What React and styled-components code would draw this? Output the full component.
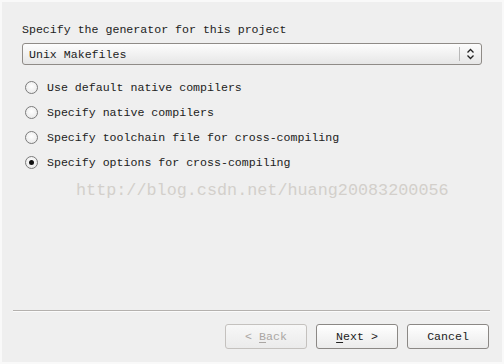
import React from 'react';
import styled, { createGlobalStyle } from 'styled-components';

const Global = createGlobalStyle`
  html, body {
    margin: 0;
    padding: 0;
    background: #efefef;
  }
`;

const Window = styled.div`
  width: 504px;
  height: 364px;
  box-sizing: border-box;
  border: 2px solid #f9f9f9;
  background: #efefef;
  display: flex;
  flex-direction: column;
  font-family: 'Liberation Mono', 'DejaVu Sans Mono', monospace;
  font-size: 11.6px;
  color: #222;
`;

const Body = styled.div`
  padding: 21px 20px 0 20px;
  display: flex;
  flex-direction: column;
`;

const Label = styled.div`
  line-height: 14px;
  height: 14px;
`;

const Combo = styled.div`
  margin-top: 6px;
  height: 22px;
  box-sizing: border-box;
  border: 1px solid #8f8b87;
  border-radius: 3px;
  background: linear-gradient(#fdfdfd, #e6e6e6);
  display: flex;
  align-items: center;
`;

const ComboText = styled.span`
  flex: 1;
  padding-left: 6px;
`;

const ComboButton = styled.span`
  width: 21px;
  height: 14px;
  border-left: 1px solid #b8b8b8;
  display: flex;
  align-items: center;
  justify-content: center;
`;

const Options = styled.div`
  margin-top: 10px;
  display: flex;
  flex-direction: column;
`;

const Option = styled.label`
  height: 25px;
  display: flex;
  align-items: center;
  gap: 9px;
  padding-left: 3px;
`;

const Radio = styled.span`
  width: 13px;
  height: 13px;
  box-sizing: border-box;
  border-radius: 50%;
  border: 1px solid #7b7b7b;
  background: radial-gradient(circle at 50% 40%, #ffffff, #e4e4e4);
  display: flex;
  align-items: center;
  justify-content: center;
  &::after {
    content: '';
    width: 5px;
    height: 5px;
    border-radius: 50%;
    background: ${(p) => (p.checked ? '#111' : 'transparent')};
  }
`;

const Watermark = styled.div`
  margin-top: 6px;
  padding-left: 54px;
  font-family: 'Liberation Mono', monospace;
  font-size: 16.8px;
  line-height: 20px;
  color: #d3cfcb;
`;

const Footer = styled.div`
  margin-top: auto;
  padding: 0 12px 13px 11px;
  display: flex;
  flex-direction: column;
`;

const Separator = styled.div`
  height: 1px;
  background: #b4b1ae;
  border-bottom: 1px solid #fbfbfb;
`;

const Buttons = styled.div`
  margin-top: 12px;
  padding-right: 1px;
  display: flex;
  justify-content: flex-end;
  gap: 9px;
`;

const Button = styled.button`
  width: 82px;
  height: 25px;
  box-sizing: border-box;
  border: 1px solid ${(p) => (p.disabled ? '#c4c1be' : '#8b8885')};
  border-radius: 3px;
  background: ${(p) =>
    p.disabled ? 'linear-gradient(#f7f7f7, #ebebeb)' : 'linear-gradient(#ffffff, #ebebeb)'};
  color: ${(p) => (p.disabled ? '#aaa6a3' : '#222')};
  font-family: inherit;
  font-size: 11.6px;
  padding: 0;
  display: flex;
  align-items: center;
  justify-content: center;
  white-space: pre;
`;

const Mnemonic = styled.span`
  text-decoration: underline;
  text-underline-offset: 2px;
`;

const Arrows = () => (
  <svg width="9" height="12" viewBox="0 0 9 12" fill="none" stroke="#222" strokeWidth="1.3">
    <path d="M1.5 4.5 L4.5 1.5 L7.5 4.5" />
    <path d="M1.5 7.5 L4.5 10.5 L7.5 7.5" />
  </svg>
);

const options = [
  'Use default native compilers',
  'Specify native compilers',
  'Specify toolchain file for cross-compiling',
  'Specify options for cross-compiling',
];

const App = () => (
  <Window>
    <Global />
    <Body>
      <Label>Specify the generator for this project</Label>
      <Combo>
        <ComboText>Unix Makefiles</ComboText>
        <ComboButton>
          <Arrows />
        </ComboButton>
      </Combo>
      <Options>
        {options.map((o, i) => (
          <Option key={o}>
            <Radio checked={i === 3} />
            {o}
          </Option>
        ))}
      </Options>
      <Watermark>http://blog.csdn.net/huang20083200056</Watermark>
    </Body>
    <Footer>
      <Separator />
      <Buttons>
        <Button disabled>
          {'< '}
          <Mnemonic>B</Mnemonic>ack
        </Button>
        <Button>
          <Mnemonic>N</Mnemonic>
          {'ext >'}
        </Button>
        <Button>Cancel</Button>
      </Buttons>
    </Footer>
  </Window>
);

export default App;
